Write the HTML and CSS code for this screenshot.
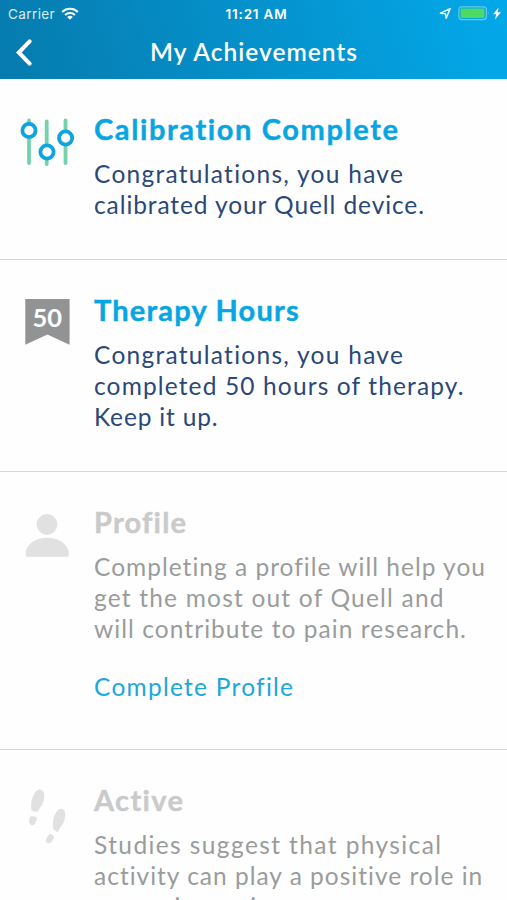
FILE: index.html
```
<!DOCTYPE html>
<html lang="en">
<head>
<meta charset="utf-8">
<title>My Achievements</title>
<link rel="stylesheet" href="styles.css">
</head>
<body>
<div class="screen">
  <header class="header">
    <div class="status">
      <div class="status-left">
        <span class="carrier">Carrier</span>
        <svg class="wifi" width="18" height="13" viewBox="0 0 18 13">
          <g fill="none" stroke="#fff" stroke-width="2">
            <path d="M1.2 5A11.2 11.2 0 0 1 16.8 5"/>
            <path d="M4 8A7.2 7.2 0 0 1 14 8"/>
          </g>
          <path fill="#fff" d="M9 12.8L6.2 9.9A4.2 4.2 0 0 1 11.8 9.9Z"/>
        </svg>
      </div>
      <div class="time">11:21 AM</div>
      <div class="status-right">
        <svg width="13" height="13" viewBox="0 0 13 13"><path d="M1.4 6.2L11.2 1.6L7.2 11.2L6.4 6.7Z" fill="none" stroke="#e6f6fd" stroke-width="1.5" stroke-linejoin="round"/></svg>
        <svg class="battery" width="32" height="15" viewBox="0 0 32 15">
          <rect x=".8" y=".8" width="27.6" height="12.8" rx="3" fill="none" stroke="#6bc6ef" stroke-width="1.2"/>
          <rect x="2.5" y="2.5" width="24" height="9.4" rx="1.2" fill="#4cd964"/>
          <path d="M29.8 5.2Q31.4 7.2 29.8 9.2Z" fill="#6bc6ef"/>
        </svg>
        <svg width="8" height="13" viewBox="0 0 8 13"><path d="M5.6 .4L.1 7.3H3.2L2 12.6L7.9 5.3H4.6Z" fill="#fff"/></svg>
      </div>
    </div>
    <div class="nav">
      <svg class="back" width="18" height="28" viewBox="0 0 18 28"><path d="M14.6 3.4L3.8 14.5L14.6 25.6" fill="none" stroke="#fff" stroke-width="4" stroke-linecap="round" stroke-linejoin="miter"/></svg>
      <h1 class="title">My Achievements</h1>
    </div>
  </header>

  <main>
    <section class="card">
      <div class="icon">
        <svg width="94" height="70" viewBox="0 0 94 70">
          <g stroke="#73d2ac" stroke-width="3.8" stroke-linecap="round"><path d="M29 12.5V55M46.7 13.5V56M65.5 12.5V55"/></g>
          <g fill="#fff" stroke="#0fa4df" stroke-width="3.8"><circle cx="29" cy="22.5" r="6.6"/><circle cx="47" cy="44" r="6.6"/><circle cx="65.6" cy="30" r="6.6"/></g>
        </svg>
      </div>
      <div class="content">
        <h2 class="heading h-calibration">Calibration Complete</h2>
        <p class="text"><span class="line l1">Congratulations, you have</span><span class="line l2">calibrated your Quell device.</span></p>
      </div>
    </section>

    <section class="card">
      <div class="icon">
        <svg width="94" height="70" viewBox="0 0 94 70">
          <path d="M25.3 10H69.6V55.8L47.4 45.6L25.3 55.8Z" fill="#919395"/>
          <text class="badge" x="47.2" y="38" text-anchor="middle">50</text>
        </svg>
      </div>
      <div class="content">
        <h2 class="heading h-therapy">Therapy Hours</h2>
        <p class="text"><span class="line l1">Congratulations, you have</span><span class="line l3">completed 50 hours of therapy.</span><span class="line l4">Keep it up.</span></p>
      </div>
    </section>

    <section class="card locked card-profile">
      <div class="icon">
        <svg width="94" height="70" viewBox="0 0 94 70" fill="#e1e1e1">
          <circle cx="47" cy="23.5" r="10.4"/>
          <path d="M25.7 53V54.7Q25.7 55.8 26.8 55.8H67.6Q68.8 55.8 68.8 54.7V53C68.8 43.5 59 36.7 47.2 36.7S25.7 43.5 25.7 53Z"/>
        </svg>
      </div>
      <div class="content">
        <h2 class="heading h-profile">Profile</h2>
        <p class="text"><span class="line l5">Completing a profile will help you</span><span class="line l6">get the most out of Quell and</span><span class="line l7">will contribute to pain research.</span></p>
        <a class="link">Complete Profile</a>
      </div>
    </section>

    <section class="card locked">
      <div class="icon">
        <svg width="94" height="96" viewBox="0 0 94 96" fill="#e1e1e1">
          <path d="M31.4 60.2C30.6 54.5 31.3 49 34.5 43.2C37.2 39.2 40.4 38.6 42.8 41.1C45.1 44 44.8 49.5 42.2 54.4C40.4 57.5 38.8 59 38.1 61.6C35.8 61.9 33.3 61.4 31.4 60.2Z"/>
          <path d="M30.2 66.6Q33.6 65.8 36.9 67.4C36.6 71 35.4 74.9 32 75.2C28.4 74.8 28.6 70.5 30.2 66.6Z"/>
          <path d="M53 78.6C53 71 52.8 67 57 60.9C60 57.8 63.5 58.2 64.7 61.2C66 66 64.5 71.6 61.7 75.7C59.7 78.2 58.7 79.2 58.3 82.2C56.2 81.6 54.3 80.5 53 78.6Z"/>
          <path d="M50 83.8Q52.5 84.4 54.3 87C53 90.2 51.3 93 48.8 93.3C45.6 92.8 45.3 90 46.8 87.4Q48 85.4 50 83.8Z"/>
        </svg>
      </div>
      <div class="content">
        <h2 class="heading h-active">Active</h2>
        <p class="text"><span class="line l8">Studies suggest that physical</span><span class="line l9">activity can play a positive role in</span><span class="line l10">managing pain.</span></p>
      </div>
    </section>
  </main>
</div>
</body>
</html>
```
FILE: styles.css
```
* { box-sizing: border-box; }
body { margin: 0; background: #fefefe; font-family: Lato, "Open Sans", sans-serif; }
h1, h2, p { margin: 0; }
svg { display: block; flex: none; }
.screen { width: 507px; height: 900px; overflow: hidden; }

.header { height: 79px; background: linear-gradient(75deg, #067bae 0%, #0590ca 48%, #03a9ea 100%); color: #fff; }
.status { display: grid; grid-template-columns: 1fr auto 1fr; height: 27px; padding: 0 6px 0 8px; align-items: center; font: 400 13.5px Inter, sans-serif; }
.status-left { display: flex; align-items: center; gap: 6px; }
.carrier { color: #d9edf6; letter-spacing: .4px; }
.time { font-weight: 600; font-size: 13.5px; letter-spacing: .8px; margin-left: 4px; }
.status-right { display: flex; align-items: center; justify-content: flex-end; gap: 4px; }
.battery { margin: 0 -1px 0 2px; }
.nav { display: grid; grid-template-columns: 94px 1fr 94px; height: 50px; align-items: center; }
.back { margin-left: 15px; }
.title { font-size: 24.5px; font-weight: 600; line-height: 30px; letter-spacing: 1px; text-align: center; white-space: nowrap; padding-left: 1px; }

.card { display: flex; padding: 33px 0 39px; border-bottom: 1px solid #d6d6d6; }
.card-profile { padding-bottom: 47px; }
.icon { width: 94px; flex: none; margin-top: -4px; height: 70px; }
.content { flex: 1; min-width: 0; white-space: nowrap; }
.heading { color: #08a5e3; font-size: 29px; font-weight: 700; line-height: 34px; margin-bottom: 12px; -webkit-text-stroke: .4px currentColor; }
.text { color: #2b4877; font-size: 24.5px; line-height: 31px; }
.line { display: block; }
.locked .heading { color: #cacaca; }
.locked .text { color: #9a9c9c; }
.locked:last-child .icon { margin-top: -33px; height: 96px; }
.link { display: block; margin: 27px 0 0; color: #1ca7dd; font-size: 24.5px; line-height: 31px; letter-spacing: 1.26px; }
.badge { fill: #fff; font-size: 25.5px; font-weight: 700; }

.h-calibration { letter-spacing: 1.62px; }
.h-therapy { letter-spacing: 1.19px; }
.h-profile { letter-spacing: 1.2px; }
.h-active { letter-spacing: 1.34px; }
.l1 { letter-spacing: 1.27px; }
.l2 { letter-spacing: .91px; }
.l3 { letter-spacing: 1.14px; }
.l4 { letter-spacing: .82px; }
.l5 { letter-spacing: 1.01px; }
.l6 { letter-spacing: 1.2px; }
.l7 { letter-spacing: 1.06px; }
.l8 { letter-spacing: 1.4px; }
.l9 { letter-spacing: 1px; }
.l10 { letter-spacing: 1.9px; }
```
